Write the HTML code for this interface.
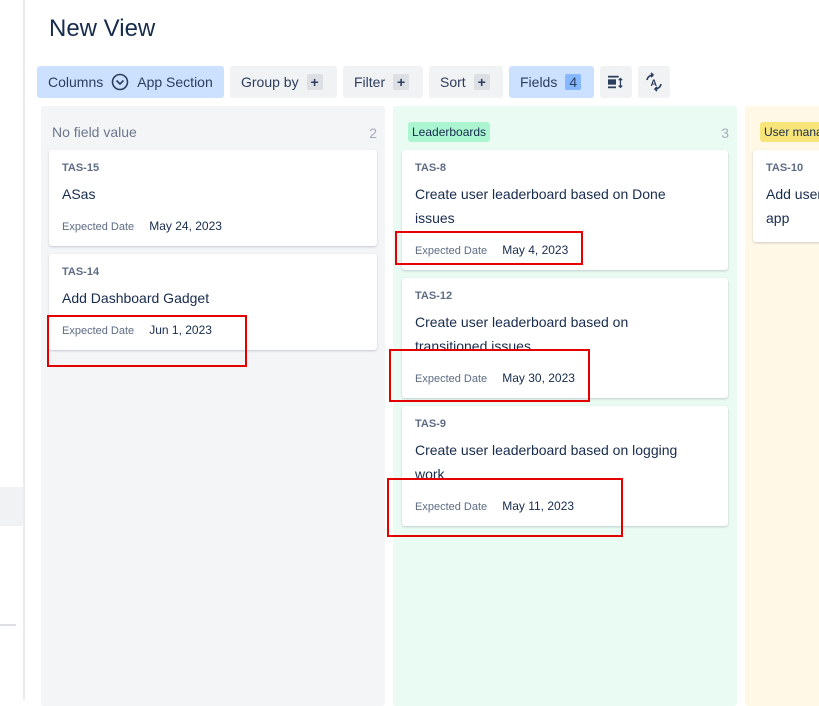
<!DOCTYPE html>
<html><head><style>
*{box-sizing:border-box;margin:0;padding:0}
body{width:819px;height:700px;overflow:hidden;background:#fff;font-family:"Liberation Sans",sans-serif;color:#172b4d;position:relative}
.abs{position:absolute}
.side{left:0;top:0;width:25px;height:700px;background:#fff;border-right:2px solid #ebecf0}
.btn{position:absolute;top:66px;height:32px;border-radius:3px;background:#f1f2f4;font-size:14px;color:#2c3e5d;display:flex;align-items:center;padding:0 11px;gap:8px}
.btn.sel{background:#cce0ff}
.plus{width:16px;height:16px;background:#dcdfe4;border-radius:2px;font-size:14px;display:flex;align-items:center;justify-content:center;font-weight:bold}
.col{position:absolute;top:106px;width:344px;height:600px;border-radius:3px}
.card{position:absolute;background:#fff;border-radius:3px;box-shadow:0 1px 2px rgba(9,30,66,.2);padding:0 12px}
.key{position:absolute;left:13px;top:12px;font-size:11px;font-weight:bold;color:#5e6c84}
.title{position:absolute;left:13px;top:32px;font-size:14px;line-height:24px;width:280px}
.date{position:absolute;left:13px;font-size:11px;color:#5e6c84}
.date b{font-weight:normal;color:#172b4d;font-size:12px;margin-left:12px}
.red{position:absolute;border:2px solid #e50000}
.cnt{position:absolute;top:19px;font-size:14px;color:#a5adba}
.lz{position:absolute;top:16px;height:20px;border-radius:3px;font-size:12px;padding:3px 4px;color:#172b4d}
</style></head><body>
<div class="abs side"></div>
<div class="abs" style="left:0;top:487px;width:23px;height:39px;background:#f1f2f4"></div>
<div class="abs" style="left:0;top:624px;width:16px;height:2px;background:#dcdfe4"></div>
<div class="abs" style="left:49px;top:15px;font-size:24px;color:#172b4d">New View</div>

<div class="btn sel" style="left:37px;width:187px">Columns <svg width="18" height="18" viewBox="0 0 18 18"><circle cx="9" cy="9" r="7.5" fill="none" stroke="#2c3e5d" stroke-width="1.6"/><path d="M5.5 7.5l3.5 3.5 3.5-3.5" fill="none" stroke="#2c3e5d" stroke-width="1.6"/></svg> App Section</div>
<div class="btn" style="left:230px;width:107px">Group by <span class="plus">+</span></div>
<div class="btn" style="left:343px;width:80px">Filter <span class="plus">+</span></div>
<div class="btn" style="left:429px;width:74px">Sort <span class="plus">+</span></div>
<div class="btn sel" style="left:509px;width:85px">Fields <span style="background:#85b8ff;border-radius:2px;padding:0 4px;font-size:14px">4</span></div>
<div class="btn" style="left:600px;width:32px;padding:0 8px"><svg width="18" height="16" viewBox="0 0 18 16"><rect x="0" y="1" width="12" height="2" fill="#2c3e5d"/><rect x="0" y="5" width="9" height="6" fill="#2c3e5d"/><rect x="0" y="13" width="9" height="2" fill="#2c3e5d"/><path d="M14 5v8M12 6l2-2 2 2M12 12l2 2 2-2" fill="none" stroke="#2c3e5d" stroke-width="1.4"/></svg></div>
<div class="btn" style="left:638px;width:32px;padding:0 6px"><svg width="20" height="20" viewBox="0 0 20 20"><path d="M3 8a6 6 0 0 1 6-5M7 1l2 2-2 2M17 12a6 6 0 0 1-6 5M13 19l-2-2 2-2" fill="none" stroke="#2c3e5d" stroke-width="1.6"/><text x="6.5" y="14" font-size="9" font-weight="bold" fill="#2c3e5d" font-family="Liberation Sans">A</text></svg></div>

<div class="col" style="left:41px;background:#f4f5f7">
<div style="position:absolute;left:11px;top:18px;font-size:14px;color:#6b778c">No field value</div>
<div class="cnt" style="right:8px">2</div>
<div class="card" style="left:8px;top:44px;width:328px;height:96px"><div class="key">TAS-15</div><div class="title">ASas</div><div class="date" style="top:69px">Expected Date <b>May 24, 2023</b></div></div>
<div class="card" style="left:8px;top:148px;width:328px;height:96px"><div class="key">TAS-14</div><div class="title">Add Dashboard Gadget</div><div class="date" style="top:69px">Expected Date <b>Jun 1, 2023</b></div></div>
</div>

<div class="col" style="left:393px;background:#eafbf3">
<div class="lz" style="left:15px;background:#abf5d1">Leaderboards</div>
<div class="cnt" style="right:8px">3</div>
<div class="card" style="left:9px;top:44px;width:326px;height:120px"><div class="key">TAS-8</div><div class="title">Create user leaderboard based on Done issues</div><div class="date" style="top:93px">Expected Date <b>May 4, 2023</b></div></div>
<div class="card" style="left:9px;top:172px;width:326px;height:120px"><div class="key">TAS-12</div><div class="title">Create user leaderboard based on transitioned issues</div><div class="date" style="top:93px">Expected Date <b>May 30, 2023</b></div></div>
<div class="card" style="left:9px;top:300px;width:326px;height:120px"><div class="key">TAS-9</div><div class="title">Create user leaderboard based on logging work</div><div class="date" style="top:93px">Expected Date <b>May 11, 2023</b></div></div>
</div>

<div class="col" style="left:745px;background:#fff8e6">
<div class="lz" style="left:15px;background:#f8e57a;width:80px;overflow:hidden;white-space:nowrap">User management</div>
<div class="card" style="left:8px;top:44px;width:100px;height:92px"><div class="key">TAS-10</div><div class="title" style="white-space:nowrap">Add user<br>app</div></div>
</div>

<div class="red" style="left:395px;top:231px;width:188px;height:34px"></div>
<div class="red" style="left:47px;top:315px;width:200px;height:52px"></div>
<div class="red" style="left:389px;top:349px;width:201px;height:53px"></div>
<div class="red" style="left:387px;top:478px;width:236px;height:59px"></div>
</body></html>
